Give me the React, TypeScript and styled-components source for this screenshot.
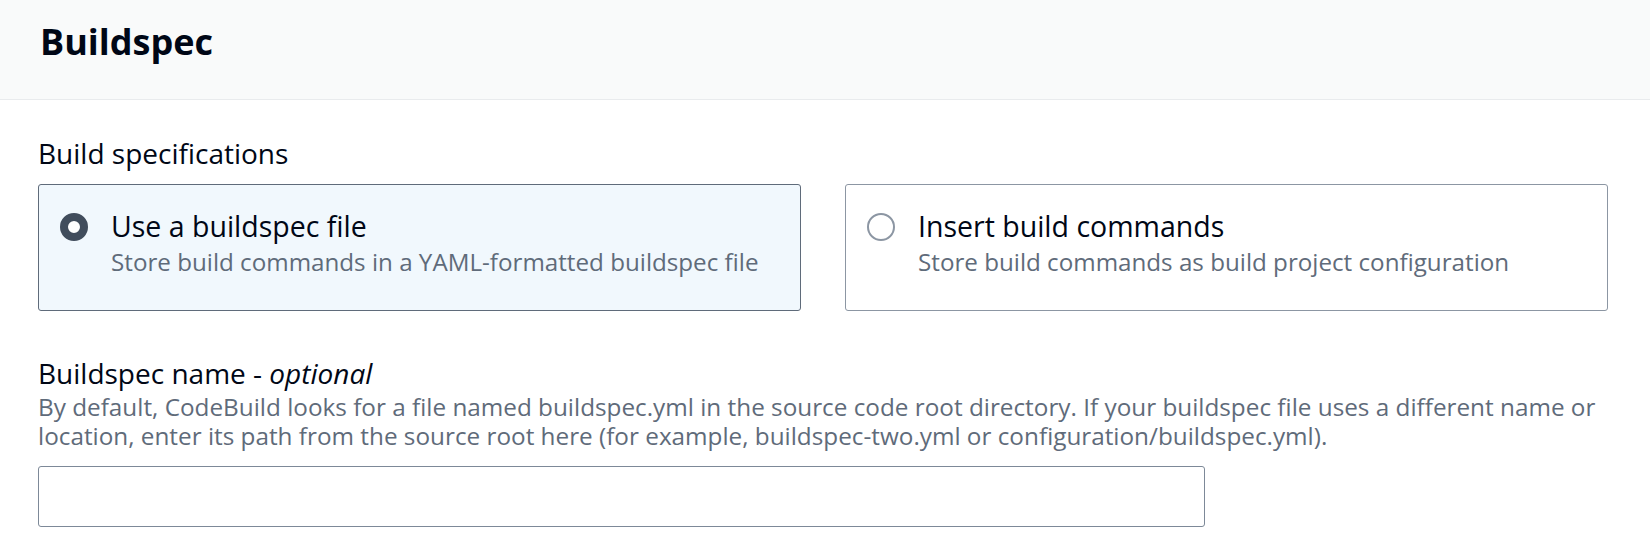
import styled, { createGlobalStyle } from "styled-components";

const GlobalStyle = createGlobalStyle`
  body {
    margin: 0;
    background: #ffffff;
    font-family: "Open Sans", Lato, sans-serif;
    color: #000716;
  }
`;

const options = [
  {
    id: "file",
    title: "Use a buildspec file",
    description: "Store build commands in a YAML-formatted buildspec file",
  },
  {
    id: "commands",
    title: "Insert build commands",
    description: "Store build commands as build project configuration",
  },
];

const App = () => {
  const selected = "file";

  return (
    <>
      <GlobalStyle />
      <Container>
        <Header>
          <Heading>Buildspec</Heading>
        </Header>
        <Body>
          <Field>
            <Label>Build specifications</Label>
            <Tiles>
              {options.map((option) => (
                <Tile key={option.id} $checked={option.id === selected}>
                  <Radio $checked={option.id === selected} />
                  <TileText>
                    <TileTitle>{option.title}</TileTitle>
                    <TileDescription>{option.description}</TileDescription>
                  </TileText>
                </Tile>
              ))}
            </Tiles>
          </Field>
          <Field>
            <Label>
              Buildspec name - <em>optional</em>
            </Label>
            <Description>
              By default, CodeBuild looks for a file named buildspec.yml in the
              source code root directory. If your buildspec file uses a
              different name or location, enter its path from the source root
              here (for example, buildspec-two.yml or
              configuration/buildspec.yml).
            </Description>
            <Input type="text" />
          </Field>
        </Body>
      </Container>
    </>
  );
};

const Container = styled.div`
  width: 1650px;
  height: 533px;
  overflow: hidden;
`;

const Header = styled.header`
  height: 100px;
  box-sizing: border-box;
  padding: 20px 40px 0;
  background: #f9fafa;
  border-bottom: 1px solid #e9ebed;
`;

const Heading = styled.h2`
  margin: 0;
  font-size: 36px;
  line-height: 44px;
  font-weight: 700;
  color: #000716;
`;

const Body = styled.div`
  padding: 36px 42px 0 38px;
  display: flex;
  flex-direction: column;
  gap: 45px;
`;

const Field = styled.div`
  display: flex;
  flex-direction: column;
`;

const Label = styled.div`
  font-size: 28px;
  line-height: 34px;
  color: #000716;

  em {
    font-style: italic;
  }
`;

const Tiles = styled.div`
  margin-top: 14px;
  display: grid;
  grid-template-columns: 1fr 1fr;
  gap: 44px;
`;

const Tile = styled.div<{ $checked: boolean }>`
  display: flex;
  align-items: flex-start;
  gap: 23px;
  height: 127px;
  box-sizing: border-box;
  padding: 23px 21px;
  border-radius: 3px;
  border: 1px solid ${({ $checked }) => ($checked ? "#5f6b7a" : "#8c96a3")};
  background: ${({ $checked }) => ($checked ? "#f1f8fd" : "#ffffff")};
`;

const Radio = styled.span<{ $checked: boolean }>`
  flex: none;
  width: 28px;
  height: 28px;
  margin-top: 5px;
  box-sizing: border-box;
  border-radius: 50%;
  border: ${({ $checked }) =>
    $checked ? "8px solid #414d5c" : "2px solid #8c96a3"};
  background: #ffffff;
`;

const TileText = styled.div`
  display: flex;
  flex-direction: column;
`;

const TileTitle = styled.div`
  font-size: 28.5px;
  line-height: 36px;
  color: #000716;
`;

const TileDescription = styled.div`
  margin-top: 2px;
  font-size: 24.2px;
  line-height: 32px;
  color: #5f6b7a;
`;

const Description = styled.div`
  margin-top: 2px;
  font-size: 24.3px;
  line-height: 29px;
  color: #5f6b7a;
`;

const Input = styled.input`
  margin-top: 16px;
  width: 1167px;
  height: 61px;
  box-sizing: border-box;
  border: 1px solid #7d8998;
  border-radius: 3px;
  background: #ffffff;
  padding: 0 16px;
  font-size: 24px;
  font-family: inherit;
`;

export default App;
